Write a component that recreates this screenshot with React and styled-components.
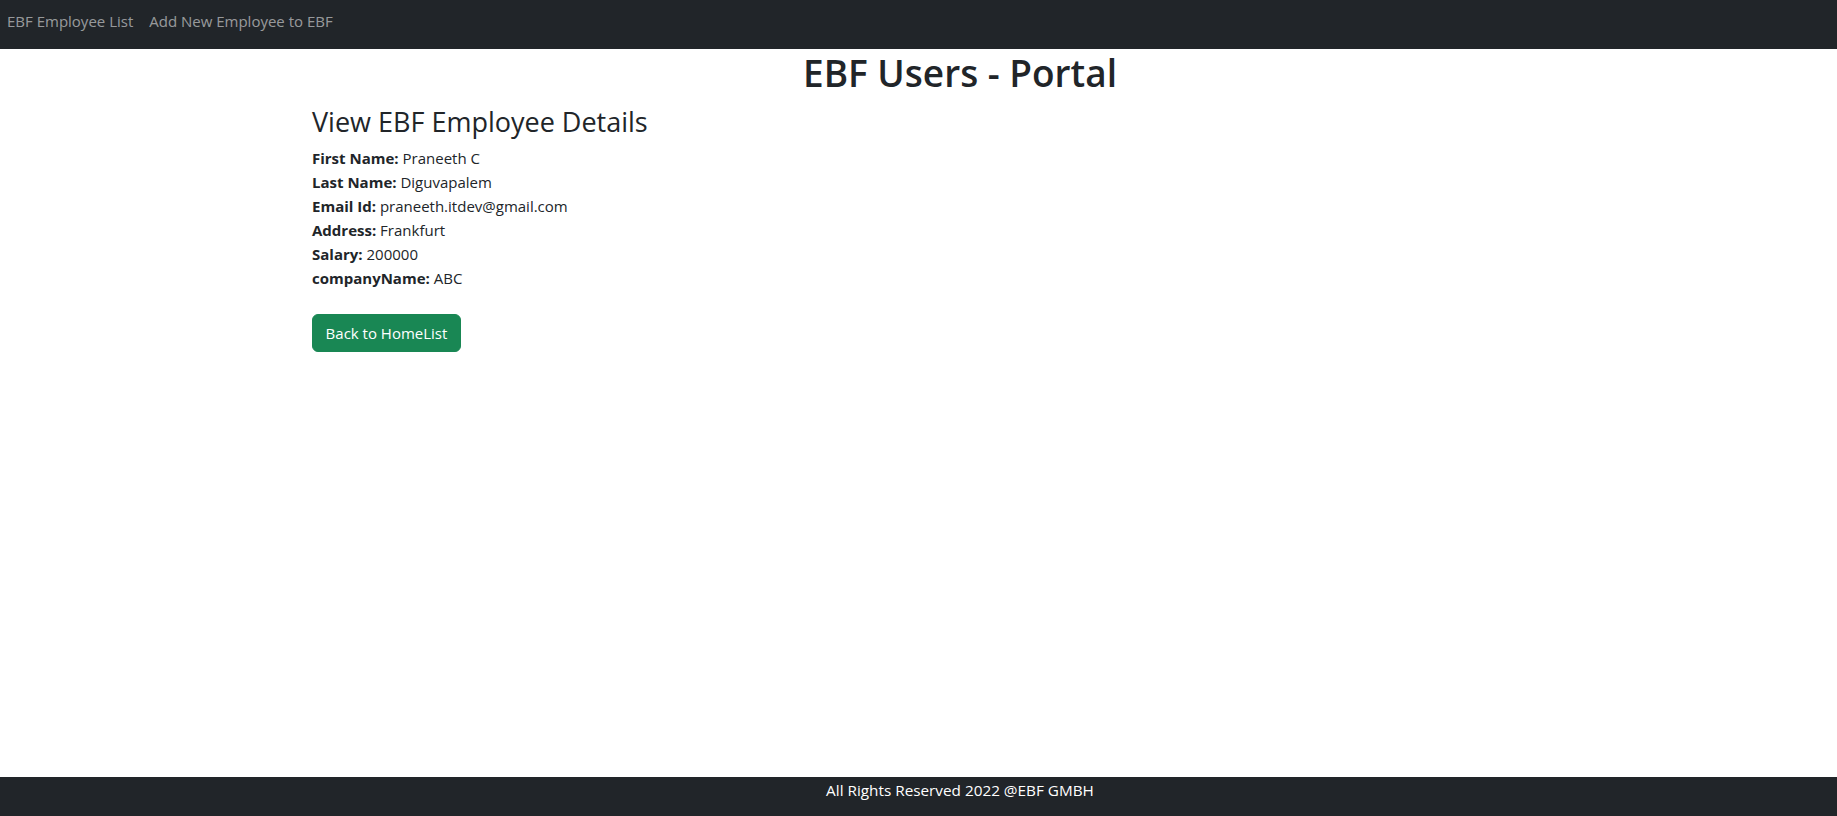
import React from "react";
import styled, { createGlobalStyle } from "styled-components";

const GlobalStyle = createGlobalStyle`
  html, body {
    margin: 0;
    padding: 0;
  }
  body {
    font-family: "Open Sans", "Noto Sans", sans-serif;
    font-size: 16px;
    line-height: 1.5;
    color: #212529;
    background: #fff;
  }
`;

const Page = styled.div`
  min-height: 816px;
  display: flex;
  flex-direction: column;
`;

const NavBar = styled.nav`
  height: 49px;
  background: #212529;
  display: flex;
  align-items: flex-start;
  padding: 9px 0 0 0;
  box-sizing: border-box;
`;

const NavLink = styled.a`
  color: rgba(255, 255, 255, 0.55);
  text-decoration: none;
  font-size: 15px;
  padding: 0 8px;
  line-height: 24px;
  &:first-child {
    padding-left: 7px;
  }
`;

const Main = styled.main`
  flex: 1;
  margin-left: 312px;
  width: 1296px;
`;

const Title = styled.h1`
  margin: 0 0 8px 0;
  text-align: center;
  font-size: 37px;
  font-weight: 600;
  line-height: 48px;
`;

const SubTitle = styled.h3`
  margin: 0 0 8px 0;
  font-size: 27px;
  font-weight: 500;
  line-height: 33px;
`;

const Row = styled.div`
  font-size: 15px;
  line-height: 24px;
`;

const Label = styled.b`
  font-weight: 700;
`;

const Button = styled.button`
  margin-top: 24px;
  height: 38px;
  width: 149px;
  background: #198754;
  color: #fff;
  border: 1px solid #198754;
  border-radius: 6px;
  font-family: inherit;
  font-size: 15px;
  padding: 0;
  cursor: pointer;
`;

const Footer = styled.footer`
  height: 39px;
  background: #212529;
  color: #fff;
  font-size: 15.3px;
  line-height: 24px;
  padding-top: 1px;
  box-sizing: border-box;
`;

const FooterText = styled.div`
  margin-left: 312px;
  width: 1296px;
  text-align: center;
`;

const details = [
  ["First Name:", "Praneeth C"],
  ["Last Name:", "Diguvapalem"],
  ["Email Id:", "praneeth.itdev@gmail.com"],
  ["Address:", "Frankfurt"],
  ["Salary:", "200000"],
  ["companyName:", "ABC"],
];

const App = () => (
  <>
    <GlobalStyle />
    <Page>
      <NavBar>
        <NavLink href="#">EBF Employee List</NavLink>
        <NavLink href="#">Add New Employee to EBF</NavLink>
      </NavBar>
      <Main>
        <Title>EBF Users - Portal</Title>
        <SubTitle>View EBF Employee Details</SubTitle>
        {details.map(([label, value]) => (
          <Row key={label}>
            <Label>{label}</Label> {value}
          </Row>
        ))}
        <Button>Back to HomeList</Button>
      </Main>
      <Footer>
        <FooterText>All Rights Reserved 2022 @EBF GMBH</FooterText>
      </Footer>
    </Page>
  </>
);

export default App;
